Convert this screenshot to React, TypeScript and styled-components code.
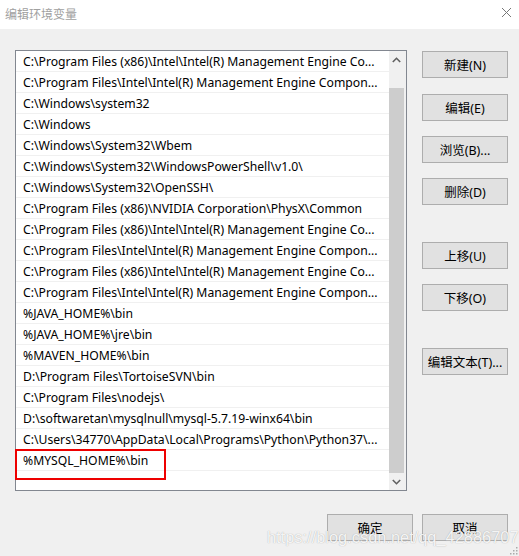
import React from "react";
import styled, { createGlobalStyle } from "styled-components";

const Global = createGlobalStyle`
  html, body { margin: 0; padding: 0; background: #f0f0f0; }
  body { font-family: "Noto Sans", "Noto Sans CJK SC", sans-serif; }
  * { box-sizing: border-box; }
`;

const Window = styled.div`
  position: relative;
  width: 519px;
  height: 556px;
  background: #f0f0f0;
  overflow: hidden;
  display: flex;
  flex-direction: column;
`;

const TitleBar = styled.div`
  height: 29px;
  background: #ffffff;
  display: flex;
  align-items: center;
  justify-content: space-between;
  padding: 0 7px 0 5px;
`;

const Title = styled.span`
  font-family: "Noto Sans CJK SC", sans-serif;
  font-size: 12px;
  color: #a0a0a0;
  margin-top: -2px;
`;

const CloseIcon = styled.svg`
  width: 11px;
  height: 11px;
  margin-top: -4px;
`;

const Body = styled.div`
  display: flex;
  padding: 21px 11px 0 15px;
  gap: 15px;
`;

const ListBox = styled.div`
  position: relative;
  width: 392px;
  height: 441px;
  border: 1px solid #828790;
  background: #ffffff;
  display: flex;
`;

const Rows = styled.div`
  flex: 1;
  overflow: hidden;
`;

const Row = styled.div`
  height: 21px;
  border-bottom: 1px solid #f0f0f0;
  padding: 1px 0 0 7px;
  display: flex;
  align-items: center;
  font-size: 12.2px;
  color: #000;
  white-space: nowrap;
  overflow: hidden;
  font-family: "Noto Sans", "Noto Sans CJK SC", sans-serif;
`;

const ScrollBar = styled.div`
  width: 17px;
  background: #f0f0f0;
  display: flex;
  flex-direction: column;
  align-items: flex-start;
`;

const Arrow = styled.div`
  width: 15px;
  height: 17px;
  display: flex;
  align-items: center;
  justify-content: center;
`;

const Thumb = styled.div`
  width: 15px;
  flex: 1;
  margin: 20px 0 0;
  background: #cdcdcd;
`;

const Highlight = styled.div`
  position: absolute;
  left: -1px;
  top: 398px;
  width: 151px;
  height: 31px;
  border: 2px solid #ee0000;
  pointer-events: none;
`;

const ButtonColumn = styled.div`
  display: flex;
  flex-direction: column;
  padding-top: 1px;
`;

const Button = styled.button<{ $gap?: number }>`
  width: 86px;
  height: 27px;
  margin-top: ${(p) => p.$gap ?? 0}px;
  background: #e1e1e1;
  border: 1px solid #adadad;
  border-radius: 0;
  padding: 0;
  font-family: "Noto Sans", "Noto Sans CJK SC", sans-serif;
  font-size: 12.5px;
  color: #000;
`;

const Footer = styled.div`
  display: flex;
  justify-content: flex-end;
  gap: 9px;
  padding: 23px 11px 0 0;
`;

const Watermark = styled.div`
  position: absolute;
  left: 267px;
  top: 527px;
  font-family: "Liberation Sans", Arial, sans-serif;
  font-size: 16.4px;
  line-height: 20px;
  color: rgba(255, 255, 255, 0.9);
  text-shadow: 0 0 1px rgba(110, 110, 110, 0.6);
  white-space: nowrap;
  pointer-events: none;
`;

const Grip = styled.svg`
  position: absolute;
  right: 1px;
  bottom: 1px;
  width: 8px;
  height: 8px;
`;

const items = [
  "C:\\Program Files (x86)\\Intel\\Intel(R) Management Engine Co...",
  "C:\\Program Files\\Intel\\Intel(R) Management Engine Compon...",
  "C:\\Windows\\system32",
  "C:\\Windows",
  "C:\\Windows\\System32\\Wbem",
  "C:\\Windows\\System32\\WindowsPowerShell\\v1.0\\",
  "C:\\Windows\\System32\\OpenSSH\\",
  "C:\\Program Files (x86)\\NVIDIA Corporation\\PhysX\\Common",
  "C:\\Program Files (x86)\\Intel\\Intel(R) Management Engine Co...",
  "C:\\Program Files\\Intel\\Intel(R) Management Engine Compon...",
  "C:\\Program Files (x86)\\Intel\\Intel(R) Management Engine Co...",
  "C:\\Program Files\\Intel\\Intel(R) Management Engine Compon...",
  "%JAVA_HOME%\\bin",
  "%JAVA_HOME%\\jre\\bin",
  "%MAVEN_HOME%\\bin",
  "D:\\Program Files\\TortoiseSVN\\bin",
  "C:\\Program Files\\nodejs\\",
  "D:\\softwaretan\\mysqlnull\\mysql-5.7.19-winx64\\bin",
  "C:\\Users\\34770\\AppData\\Local\\Programs\\Python\\Python37\\...",
  "%MYSQL_HOME%\\bin",
];

const sideButtons: { label: string; gap: number }[] = [
  { label: "新建(N)", gap: 0 },
  { label: "编辑(E)", gap: 16 },
  { label: "浏览(B)...", gap: 15 },
  { label: "删除(D)", gap: 15 },
  { label: "上移(U)", gap: 37 },
  { label: "下移(O)", gap: 15 },
  { label: "编辑文本(T)...", gap: 37 },
];

export default function App() {
  return (
    <Window>
      <Global />
      <TitleBar>
        <Title>编辑环境变量</Title>
        <CloseIcon viewBox="0 0 11 11">
          <path d="M1 1 L10 10 M10 1 L1 10" stroke="#777" strokeWidth="1" fill="none" />
        </CloseIcon>
      </TitleBar>
      <Body>
        <ListBox>
          <Rows>
            {items.map((t, i) => (
              <Row key={i}>{t}</Row>
            ))}
          </Rows>
          <ScrollBar>
            <Arrow>
              <svg width="9" height="6" viewBox="0 0 9 6">
                <path d="M0.8 5 L4.5 1.3 L8.2 5" stroke="#606060" strokeWidth="1.6" fill="none" />
              </svg>
            </Arrow>
            <Thumb />
            <Arrow>
              <svg width="9" height="6" viewBox="0 0 9 6">
                <path d="M0.8 1 L4.5 4.7 L8.2 1" stroke="#606060" strokeWidth="1.6" fill="none" />
              </svg>
            </Arrow>
          </ScrollBar>
          <Highlight />
        </ListBox>
        <ButtonColumn>
          {sideButtons.map((b) => (
            <Button key={b.label} $gap={b.gap}>
              {b.label}
            </Button>
          ))}
        </ButtonColumn>
      </Body>
      <Footer>
        <Button>确定</Button>
        <Button>取消</Button>
      </Footer>
      <Watermark>https://blog.csdn.net/qq_42886707</Watermark>
      <Grip viewBox="0 0 8 8">
        <rect x="6" y="0" width="1.5" height="1.5" fill="#aaa" />
        <rect x="3" y="3" width="1.5" height="1.5" fill="#aaa" />
        <rect x="6" y="3" width="1.5" height="1.5" fill="#aaa" />
        <rect x="0" y="6" width="1.5" height="1.5" fill="#aaa" />
        <rect x="3" y="6" width="1.5" height="1.5" fill="#aaa" />
        <rect x="6" y="6" width="1.5" height="1.5" fill="#aaa" />
      </Grip>
    </Window>
  );
}
